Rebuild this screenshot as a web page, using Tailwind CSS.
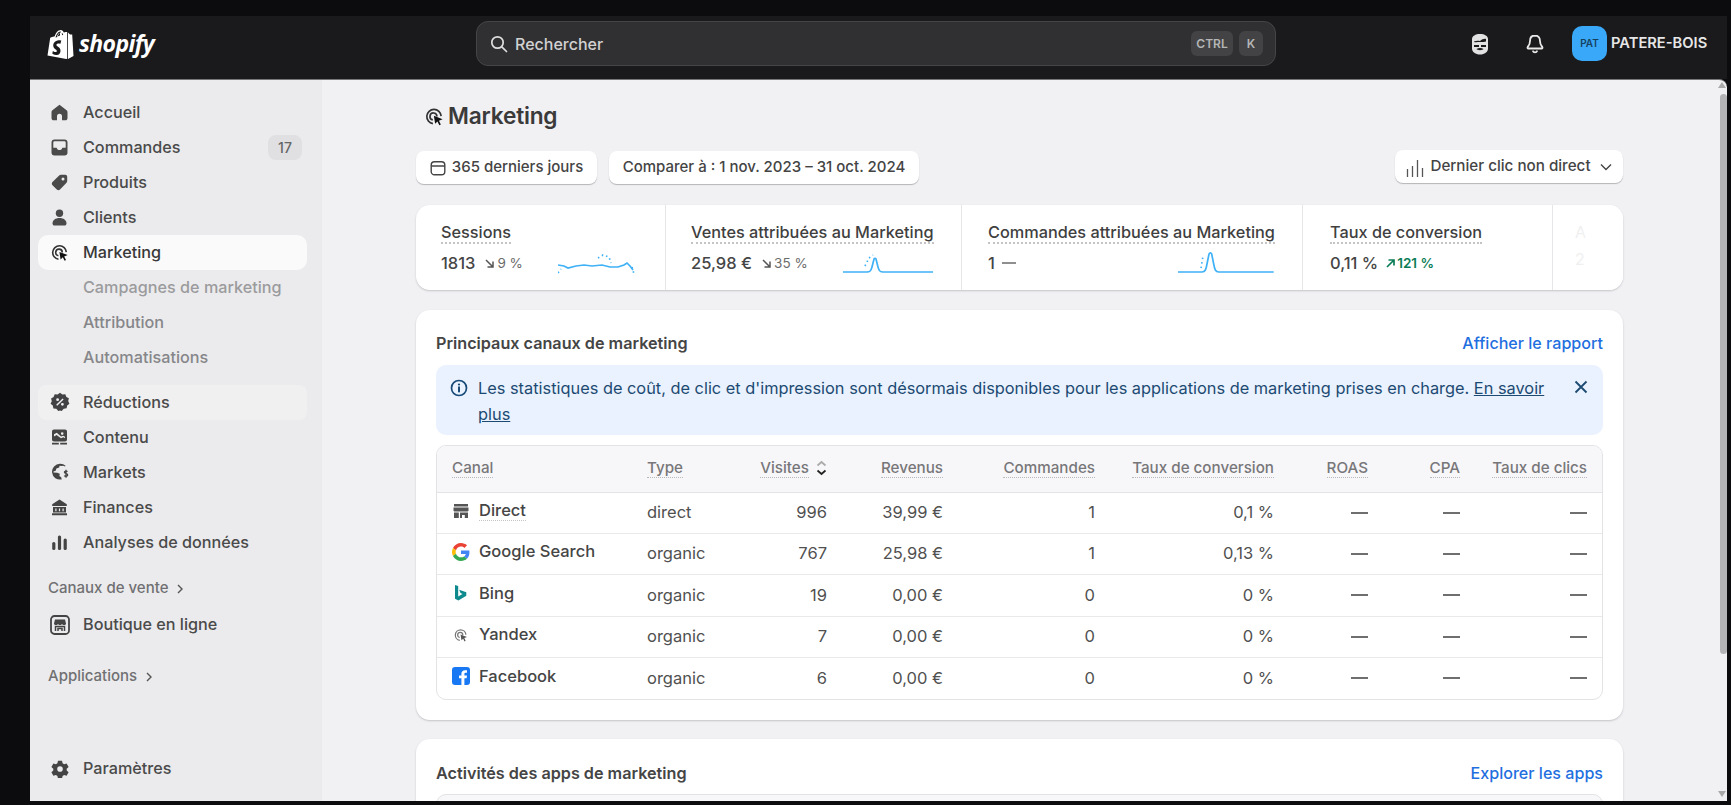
<!DOCTYPE html>
<html lang="fr">
<head>
  <meta charset="UTF-8" />
  <title>Marketing</title>
  <script src="https://cdn.jsdelivr.net/npm/@tailwindcss/browser@4"></script>
</head>
<body class="h-screen overflow-hidden bg-[#0c0b0e] pt-4 pl-[30px] pr-1 pb-1 font-['Inter',sans-serif] text-[#303030]">
  <div class="flex h-full flex-col">

    <!-- HEADER -->
    <header class="relative flex h-[63px] shrink-0 items-center bg-[#1a191b] pb-2">
      <a class="ml-[17px] flex w-[429px] items-center gap-[5px] text-white">
        <svg class="h-[30px] w-[27px]" viewBox="0 0 27 30"><path fill="#fff" d="M18 3.2l-1.2.4C16.2 2 15.2 1 13.8 1 11 1 8.600 4 7.800 7.200L4.300 8.300c-1 .3-1.100.4-1.200 1.300L.5 26.500 19.300 30l.9-.2V3.100c-.8-.1-1.500-.1-2.200.1zM11 7.300l-1 .3c.5-1.800 1.400-3.500 2.800-3.900.3 1 .4 2.500-.1 3.100zM13.300 2.500c.4 0 .7.200.9.500-1.600.7-3 2.500-3.600 5l-2.100.6c.6-2.400 2.500-6.100 4.800-6.100zM15 6.300v-.2c0-.8-.1-1.500-.3-2 .7.100 1.200.9 1.500 1.700z"/><path fill="#fff" d="M21 3.500l2 1.900 2.200.2 1.300 21.300-5.500 3z"/><path fill="#1a191b" d="M14.300 11.600l-.9 3.200s-1-.5-2.200-.4c-1.700.1-1.800 1.200-1.800 1.500.1 1.500 3.900 1.800 4.100 5.300.2 2.800-1.400 4.700-3.800 4.800-2.800.2-4.400-1.500-4.400-1.500l.6-2.500s1.600 1.200 2.800 1.100c.8 0 1.100-.7 1.100-1.200-.1-2-3.300-1.800-3.500-5-.2-2.700 1.600-5.400 5.400-5.700 1.600-.1 2.600.3 2.600.3z"/></svg>
        <span class="font-['Open_Sans',sans-serif] text-[23px] leading-none font-bold italic tracking-[-0.6px]">shopify</span>
      </a>
      <div class="flex h-[45px] w-[800px] items-center rounded-xl border border-[#454547] bg-[#303032] pr-3 pl-[13px]">
        <svg class="h-[18px] w-[18px] text-[#dedede]" viewBox="0 0 18 18" fill="none" stroke="currentColor" stroke-width="1.7"><circle cx="7.500" cy="7.500" r="5.700"/><path d="M11.800 11.800l4.700 4.700" stroke-linecap="round"/></svg>
        <span class="ml-[7px] text-[16px] font-medium text-[#d2d2d2]">Rechercher</span>
        <span class="ml-auto flex h-[25px] w-[42px] items-center justify-center rounded-md bg-[#434345] text-[12px] font-semibold text-[#b5b5b5]">CTRL</span>
        <span class="ml-[6px] flex h-[25px] w-[24px] items-center justify-center rounded-md bg-[#434345] text-[12px] font-semibold text-[#b5b5b5]">K</span>
      </div>
      <!-- avatar et icones -->
      <svg class="ml-[194px] h-[22px] w-[20px]" viewBox="0 0 20 22"><path fill="#e2e2e2" d="M2 6c0-3 3.500-5 8-5s8 2 8 5v9.500c0 3.500-3.500 6-8 6s-8-2.500-8-6z"/><path fill="#1a191b" d="M4 8.500c2-1 4-1 6-.5 2-1.500 4-2.500 6-2v2.500c-1 .5-4 .5-6 .5s-4 .5-6 0zM4 12h5v2H4zM11 12h5v2h-5zM6.500 16c2-1.500 5-1.500 7 0-1 1.500-6 1.500-7 0z"/></svg>
      <svg class="ml-[35px] h-[22px] w-[20px] text-[#e8e8e8]" viewBox="0 0 20 22" fill="none" stroke="currentColor" stroke-width="1.800"><path d="M10 2.500c-3.300 0-5 2.500-5 5.500 0 3.500-1.200 4.500-2.300 6-.5.700-.1 1.500.7 1.500h13.200c.8 0 1.200-.8.700-1.500C16.200 12.500 15 11.500 15 8c0-3-1.700-5.500-5-5.500z" stroke-linejoin="round"/><path d="M8 18.300c.5 1.300 3.500 1.300 4 0" stroke-linecap="round"/></svg>
      <span class="ml-[27px] flex h-[35px] w-[35px] items-center justify-center rounded-[10px] bg-[#3aa8f8] text-[10px] font-semibold text-[#15415f]">PAT</span>
      <span class="ml-1 text-[14.700px] font-semibold text-[#e6e6e6]">PATERE-BOIS</span>
    </header>

    <div class="flex min-h-0 flex-1 overflow-hidden rounded-tr-lg border-t border-[#777] bg-[#f1f0f3]">

      <!-- SIDEBAR -->
      <nav class="flex w-[292px] shrink-0 flex-col bg-[#ebebed] pt-[14.500px] pr-[15px] pb-[15px] pl-2 text-[16.200px] font-medium text-[#4a4a4a]">
        <a class="flex h-[35px] items-center rounded-lg pl-[13px]">
          <svg class="mr-[15px] h-[17px] w-[17px] shrink-0 text-[#4a4a4a]" viewBox="0 0 17 17"><path fill="currentColor" d="M8.500.8L1.400 6.300c-.6.500-.9 1.100-.9 1.900v6c0 1.200 1 2.100 2.100 2.100H6v-4a2.500 2.500 0 0 1 5 0v4h3.400c1.100 0 2.100-.9 2.100-2.100v-6c0-.8-.3-1.400-.9-1.900z"/></svg>
          Accueil
        </a>
        <a class="flex h-[35px] items-center rounded-lg pl-[13px]">
          <svg class="mr-[15px] h-[17px] w-[17px] shrink-0" viewBox="0 0 17 17"><path fill="none" stroke="#4a4a4a" stroke-width="1.800" d="M3.500 1.400h10c1.200 0 2.100.9 2.100 2.100v10c0 1.200-.9 2.100-2.100 2.100h-10a2.100 2.100 0 0 1-2.100-2.100v-10c0-1.200.9-2.100 2.100-2.100z"/><path fill="#4a4a4a" d="M1.500 8.700h4.100c.4 1.500 1.500 2.400 2.900 2.400s2.500-.9 2.900-2.400h4.100V14c0 1-.7 1.700-1.700 1.700H3.200c-1 0-1.700-.7-1.700-1.700z"/></svg>
          Commandes
          <span class="mr-[5px] ml-auto flex h-[25px] w-[34px] items-center justify-center rounded-lg bg-[#e0e0e2] text-[14px] text-[#666]">17</span>
        </a>
        <a class="flex h-[35px] items-center rounded-lg pl-[13px]">
          <svg class="mr-[15px] h-[17px] w-[17px] shrink-0 text-[#4a4a4a]" viewBox="0 0 17 17"><path fill="currentColor" fill-rule="evenodd" d="M10 .8h4.300c1.100 0 1.900.9 1.900 1.900V7c0 .8-.3 1.500-.9 2.100L9 15.500c-.9.900-2.300.9-3.200 0l-4.300-4.300c-.9-.9-.9-2.300 0-3.200L7.900 1.700C8.500 1.100 9.200.8 10 .8zm2 2.700a1.500 1.500 0 1 0 0 3 1.500 1.500 0 0 0 0-3z"/></svg>
          Produits
        </a>
        <a class="flex h-[35px] items-center rounded-lg pl-[13px]">
          <svg class="mr-[15px] h-[17px] w-[17px] shrink-0 text-[#4a4a4a]" viewBox="0 0 17 17"><circle fill="currentColor" cx="8.500" cy="4.200" r="3.700"/><path fill="currentColor" d="M8.500 9c-4 0-7 2.200-7 5.400 0 1.100.9 2.100 2 2.100h10c1.100 0 2-1 2-2.100C15.500 11.200 12.500 9 8.500 9z"/></svg>
          Clients
        </a>
        <a class="flex h-[35px] items-center rounded-[10px] bg-[#fafafb] pl-[13px] text-[#383838]">
          <svg class="mr-[14px] h-[17px] w-[18px] shrink-0 text-[#333]" viewBox="0 0 18 17" fill="none" stroke="currentColor" stroke-width="1.600"><path d="M7.500 15.300a6.800 6.800 0 1 1 7.800-7.200"/><path d="M7.400 11.700a3.300 3.300 0 1 1 3.900-3.300"/><path fill="#111" stroke="none" d="M8.400 7.900l8.300 3.100-3.500 1.500 1.800 3.500-1.400.7-1.800-3.500-2.200 2.200z"/></svg>
          Marketing
        </a>
        <a class="flex h-[35px] items-center pl-[45px] text-[#9b9b9d]">Campagnes de marketing</a>
        <a class="flex h-[35px] items-center pl-[45px] text-[#86868a]">Attribution</a>
        <a class="flex h-[35px] items-center pl-[45px] text-[#86868a]">Automatisations</a>
        <a class="mt-[10px] flex h-[35px] items-center rounded-lg bg-white/25 pl-[13px]">
          <svg class="mr-[13px] -ml-[1px] h-[20px] w-[20px] shrink-0 text-[#424244]" viewBox="0 0 20 20"><path fill="currentColor" fill-rule="evenodd" d="M10 .8l2.400 1.600 2.900-.2 1.100 2.700 2.500 1.400-.7 2.800 1.200 2.600-2.200 1.800-.6 2.800-2.900.4L11.700 19 10 18.500 8.300 19l-2-2.200-2.900-.4-.6-2.800L.6 11.800l1.200-2.600-.7-2.800 2.500-1.400 1.100-2.700 2.900.2zM7.600 6.300a1.400 1.400 0 1 0 0 2.800 1.400 1.400 0 0 0 0-2.800zm4.800 4.600a1.400 1.400 0 1 0 0 2.800 1.400 1.400 0 0 0 0-2.800zm.2-4.500l-6.400 6.400 1 1 6.400-6.400z"/></svg>
          Réductions
        </a>
        <a class="flex h-[35px] items-center rounded-lg pl-[13px]">
          <svg class="mr-[15px] h-[17px] w-[17px] shrink-0 text-[#444]" viewBox="0 0 17 17"><path fill="currentColor" fill-rule="evenodd" d="M3 .6h11c1.200 0 2 .9 2 2v7.800c0 1.200-.8 2-2 2H3c-1.200 0-2-.8-2-2V2.600C1 1.500 1.800.6 3 .6zm8.200 2.700a1.300 1.300 0 1 0 0 2.600 1.300 1.300 0 0 0 0-2.600zM3 5.200v2.300l2.600-1.600 4.400 3.400 2.500-1 1.500 1V7.700l-1.800-.9-2.200.8L5.800 3.800z"/><path fill="currentColor" d="M1 13.800h6.800v1.700H1zM9.200 13.800H16v1.700H9.200z"/></svg>
          Contenu
        </a>
        <a class="flex h-[35px] items-center rounded-lg pl-[13px]">
          <svg class="mr-[14px] h-[18px] w-[18px] shrink-0 text-[#444]" viewBox="0 0 18 18"><path fill="currentColor" d="M9 .8a7.900 7.900 0 1 0 1.700 15.600l-.5-2.200-1.800-1.100.4-2.300-2.600-1.100-3.700-.2-.1-1.100 2.300-.6.700-2.400 2.800-.9.300-1.800 2.500.2a3 3 0 0 1 2.900.7l.7-.8A7.900 7.900 0 0 0 9 .8z"/><path fill="none" stroke="currentColor" stroke-width="1.300" d="M16.500 8.700c-.5-.8-2.900-1-3.100.4-.2 1.600 3.300 1.100 3.300 3 0 1.500-2.600 1.500-3.500.5M15 6.800v8"/></svg>
          Markets
        </a>
        <a class="flex h-[35px] items-center rounded-lg pl-[13px]">
          <svg class="mr-[15px] h-[17px] w-[17px] shrink-0 text-[#444]" viewBox="0 0 17 17"><path fill="currentColor" fill-rule="evenodd" d="M8.500.6l7.300 4.600V7H1.200V5.200zM2 8h13v5.500H2zm2.300 1.500v2.700h1.200V9.500zm3.600 0v2.700h1.200V9.500zm3.600 0v2.700h1.200V9.500zM1 14.300h15v2H1z"/></svg>
          Finances
        </a>
        <a class="flex h-[35px] items-center rounded-lg pl-[13px]">
          <svg class="mr-[15px] h-[17px] w-[17px] shrink-0 text-[#444]" viewBox="0 0 17 17"><rect fill="currentColor" x="1.200" y="8" width="3.200" height="8" rx="1.500"/><rect fill="currentColor" x="6.900" y="1.500" width="3.200" height="14.500" rx="1.500"/><rect fill="currentColor" x="12.600" y="4.500" width="3.200" height="11.500" rx="1.500"/></svg>
          Analyses de données
        </a>
        <div class="mt-[11.500px] flex h-[35px] items-center pl-[10px] text-[15px] text-[#707072]">
          Canaux de vente
          <svg class="ml-[9px] h-[10px] w-[6px]" viewBox="0 0 6 10" fill="none" stroke="#555" stroke-width="1.400"><path d="M1 1l4 4-4 4"/></svg>
        </div>
        <a class="mt-[1px] flex h-[35px] items-center rounded-lg pl-[13px]">
          <svg class="mr-[13px] -ml-[1px] h-[20px] w-[20px] shrink-0 text-[#444]" viewBox="0 0 20 20"><rect x="1" y="1" width="18" height="18" rx="3.500" fill="none" stroke="currentColor" stroke-width="1.800"/><path fill="currentColor" d="M5 4.500h10l1 4c0 1-1 1.500-2 1.500s-1.500-.4-2-1c-.5.600-1 1-2 1s-1.500-.4-2-1c-.5.600-1 1-2 1s-2-.5-2-1.500z"/><path fill="none" stroke="currentColor" stroke-width="1.500" d="M5.500 16v-4.500h9V16M8 16v-2.500h4V16"/></svg>
          Boutique en ligne
        </a>
        <div class="mt-[17px] flex h-[35px] items-center pl-[10px] text-[15px] text-[#707072]">
          Applications
          <svg class="ml-[9px] h-[10px] w-[6px]" viewBox="0 0 6 10" fill="none" stroke="#555" stroke-width="1.400"><path d="M1 1l4 4-4 4"/></svg>
        </div>
        <a class="mt-auto flex h-[35px] items-center rounded-lg pl-[13px]">
          <svg class="mr-[14.500px] -ml-[0.5px] h-[18px] w-[18px] shrink-0 text-[#444]" viewBox="0 0 18 18"><path fill="currentColor" fill-rule="evenodd" d="M7 .8h4l.6 2.500 1.500.9 2.500-.7 2 3.500-1.900 1.800v1.700l1.900 1.800-2 3.500-2.500-.7-1.500.9-.6 2.500H7l-.6-2.500-1.500-.9-2.500.7-2-3.500 1.900-1.800V8.800L.4 7l2-3.500 2.500.7 1.500-.9zM9 6.200a2.800 2.800 0 1 0 0 5.600 2.800 2.800 0 0 0 0-5.600z"/></svg>
          Paramètres
        </a>
      </nav>

      <!-- MAIN -->
      <main class="relative min-w-0 flex-1 overflow-hidden pl-[94px]">
        <div class="w-[1207px]">
          <div class="flex h-[71px] items-center pt-[2px] pl-[9px]">
            <svg class="mr-[4px] h-[19px] w-[19px] text-[#333]" viewBox="0 0 18 17" fill="none" stroke="currentColor" stroke-width="1.600"><path d="M7.500 15.300a6.800 6.800 0 1 1 7.800-7.200"/><path d="M7.400 11.700a3.300 3.300 0 1 1 3.900-3.300"/><path fill="#111" stroke="none" d="M8.400 7.900l8.300 3.100-3.500 1.500 1.800 3.500-1.400.7-1.800-3.500-2.200 2.200z"/></svg>
            <h1 class="text-[22.700px] font-semibold tracking-[-0.2px] text-[#3a3a3a]">Marketing</h1>
          </div>

          <div class="flex items-start">
            <button class="flex h-[33px] w-[181px] items-center justify-center gap-[6px] rounded-lg bg-white text-[15px] font-medium text-[#444] shadow-[0_1px_1px_#b5b5b8]">
              <svg class="h-[16px] w-[16px]" viewBox="0 0 16 16" fill="none" stroke="#444" stroke-width="1.400"><rect x="1.200" y="1.700" width="13.600" height="13" rx="3.300"/><path d="M1.200 6h13.600"/></svg>
              365 derniers jours
            </button>
            <button class="ml-[12px] flex h-[33px] w-[310px] items-center justify-center rounded-lg bg-white text-[15px] font-medium text-[#444] shadow-[0_1px_1px_#b5b5b8]">Comparer à : 1 nov. 2023 – 31 oct. 2024</button>
            <button class="-mt-[1px] ml-auto flex h-[33px] w-[228px] items-center justify-center gap-[6px] rounded-lg bg-white text-[15.200px] font-medium text-[#444] shadow-[0_1px_1px_#b5b5b8]">
              <svg class="h-[24px] w-[18px]" viewBox="0 0 18 24" stroke="#555" stroke-width="1.300"><path d="M1.500 14v8M6.500 11v11M11.500 5v17M16.500 13v9"/></svg>
              Dernier clic non direct
              <svg class="ml-[3px] h-[8px] w-[12px]" viewBox="0 0 12 8" fill="none" stroke="#444" stroke-width="1.400"><path d="M1 1.500l5 5 5-5"/></svg>
            </button>
          </div>

          <!-- Metriques -->
          <section class="relative mt-[21px] flex h-[85px] overflow-hidden rounded-[14px] bg-white shadow-[0_1px_2px_#c4c4c8]">
            <div class="w-[250px] border-r border-[#e6e6e8] pt-[18px] pr-[29px] pl-[25px]">
              <span class="block w-fit border-b-2 border-dotted border-[#c4c4c6] text-[16.300px] leading-[19px] font-medium text-[#3f3f3f]">Sessions</span>
              <div class="mt-[7px] flex h-[24px] items-center">
                <span class="text-[16.500px] font-medium text-[#454545]">1813</span>
                <svg class="ml-[10px] h-[9px] w-[9px]" viewBox="0 0 9 9" fill="none" stroke="#555" stroke-width="1.500"><path d="M1 1l6.500 6.500M8 2.500V8H2.500"/></svg>
                <span class="ml-[3px] text-[13.500px] text-[#6b6b6b]">9 %</span>
                <svg class="mt-1 ml-auto h-[28px] w-[78px]" viewBox="0 0 78 28" fill="none" stroke="#3fb1f6" stroke-width="1.700"><path d="M0 14l6 1 4 2 8-2 8-1 8 1 10-1 8 2 8 0 6-2 3-2 3 3 3 4"/><path stroke-dasharray="1.500 3" d="M40 7l5-3 6 2 2 6M0 22l3-4M74 16l2 7"/></svg>
              </div>
            </div>
            <div class="w-[296px] border-r border-[#e6e6e8] pt-[18px] pr-[26px] pl-[25px]">
              <span class="block w-fit border-b-2 border-dotted border-[#c4c4c6] text-[16.300px] leading-[19px] font-medium text-[#3f3f3f]">Ventes attribuées au Marketing</span>
              <div class="mt-[7px] flex h-[24px] items-center">
                <span class="text-[16.500px] font-medium text-[#454545]">25,98 €</span>
                <svg class="ml-[10px] h-[9px] w-[9px]" viewBox="0 0 9 9" fill="none" stroke="#555" stroke-width="1.500"><path d="M1 1l6.500 6.500M8 2.500V8H2.500"/></svg>
                <span class="ml-[3px] text-[13.500px] text-[#6b6b6b]">35 %</span>
                <svg class="mt-1 ml-auto h-[28px] w-[92px]" viewBox="0 0 92 28" fill="none" stroke="#3fb1f6" stroke-width="1.700"><path d="M0 21h24c3 0 4-1 5-5l2-8c.5-1 1.500-1 2 0l2 8c1 4 2 5 5 5h50"/><path stroke-dasharray="1.500 3" d="M22 15l2-4 2-4 4-3"/></svg>
              </div>
            </div>
            <div class="w-[341px] border-r border-[#e6e6e8] pt-[18px] pr-[27px] pl-[26px]">
              <span class="block w-fit border-b-2 border-dotted border-[#c4c4c6] text-[16.300px] leading-[19px] font-medium text-[#3f3f3f]">Commandes attribuées au Marketing</span>
              <div class="mt-[7px] flex h-[24px] items-center">
                <span class="text-[16.500px] font-medium text-[#454545]">1</span>
                <span class="ml-[7px] h-[2px] w-[14px] bg-[#8f8f8f]"></span>
                <svg class="mt-1 ml-auto h-[28px] w-[97px]" viewBox="0 0 97 28" fill="none" stroke="#3fb1f6" stroke-width="1.700"><path d="M0 21h24c3 0 4-2 5-8l2-10c.7-1.500 2-1.500 2.700 0l2 10c1 6 2 8 5 8h55"/><path stroke-dasharray="1.500 3" d="M23 17l2-12"/></svg>
              </div>
            </div>
            <div class="w-[250px] border-r border-[#e6e6e8] pt-[18px] pl-[27px]">
              <span class="block w-fit border-b-2 border-dotted border-[#c4c4c6] text-[16.300px] leading-[19px] font-medium text-[#3f3f3f]">Taux de conversion</span>
              <div class="mt-[7px] flex h-[24px] items-center">
                <span class="text-[16.500px] font-medium text-[#454545]">0,11 %</span>
                <svg class="ml-[8px] h-[9px] w-[9px]" viewBox="0 0 9 9" fill="none" stroke="#0a7d56" stroke-width="1.700"><path d="M1 8l6.500-6.500M2.500 1H8v5.500"/></svg>
                <span class="ml-[2px] text-[13.500px] font-semibold text-[#0a7d56]">121 %</span>
              </div>
            </div>
            <div class="pt-[18px] pl-[22px] text-[16px] leading-[19px] text-[#d4d4d6]">
              <span>A</span>
              <div class="mt-[8px]">2</div>
            </div>
            <div class="absolute top-0 right-0 h-full w-[70px] bg-linear-to-r from-white/40 to-white"></div>
          </section>

          <!-- Principaux canaux -->
          <section class="mt-[20px] h-[410px] rounded-[14px] bg-white px-5 pt-[20px] shadow-[0_1px_2px_#c4c4c8]">
            <div class="flex h-[26px] items-center justify-between">
              <h2 class="text-[16.200px] font-semibold text-[#454545]">Principaux canaux de marketing</h2>
              <a class="text-[16.100px] font-medium text-[#1f6fe0]">Afficher le rapport</a>
            </div>
            <div class="mt-[9px] flex h-[70px] rounded-[10px] bg-[#e9f2fe] pt-[10px] pr-[15px] pl-[14px] text-[16.350px] leading-[26px] text-[#1d4a72]">
              <svg class="mt-[4px] mr-[10px] h-[18px] w-[18px] shrink-0" viewBox="0 0 18 18" fill="none" stroke="#174a78" stroke-width="1.700"><circle cx="9" cy="9" r="7.500"/><path d="M9 8.200v4.300" stroke-width="2" stroke-linecap="round"/><circle cx="9" cy="5.500" r="1.100" fill="#174a78" stroke="none"/></svg>
              <p class="w-[1072px]">Les statistiques de coût, de clic et d'impression sont désormais disponibles pour les applications de marketing prises en charge. <a class="underline">En savoir</a> <a class="underline">plus</a></p>
              <svg class="mt-[5px] ml-auto h-[14px] w-[14px]" viewBox="0 0 14 14" stroke="#1d4a72" stroke-width="1.800"><path d="M1.500 1.500l11 11M12.500 1.500l-11 11"/></svg>
            </div>

            <div class="mt-[10px] overflow-hidden rounded-[10px] border border-[#e3e3e5]">
              <table class="w-full table-fixed border-collapse text-[16.500px] text-[#505050]">
                <colgroup>
                  <col class="w-[194px]" /><col class="w-[129px]" /><col class="w-[83px]" /><col class="w-[116px]" /><col class="w-[152px]" /><col class="w-[179px]" /><col class="w-[94px]" /><col class="w-[92px]" /><col class="w-[126px]" />
                </colgroup>
                <thead class="bg-[#f7f6f8] text-[15.200px] font-medium text-[#77777a]">
                  <tr class="h-[46px] border-b border-[#e3e3e5]">
                    <th class="pr-4 pl-[15px] text-left font-medium"><span class="border-b border-dotted border-[#b9b9bb]">Canal</span></th>
                    <th class="px-4 text-left font-medium"><span class="border-b border-dotted border-[#b9b9bb]">Type</span></th>
                    <th class="pr-4 text-right font-medium whitespace-nowrap"><span class="border-b border-dotted border-[#b9b9bb]">Visites</span>
                      <svg class="ml-[3px] inline-block h-[18px] w-[11px] align-[-4px]" viewBox="0 0 11 18" fill="none" stroke-width="1.700"><path stroke="#aaa" d="M1.500 6.500L5.500 3l4 3.500"/><path stroke="#222" d="M1.500 11.500l4 3.500 4-3.500"/></svg>
                    </th>
                    <th class="px-4 text-right font-medium"><span class="border-b border-dotted border-[#b9b9bb]">Revenus</span></th>
                    <th class="px-4 text-right font-medium"><span class="border-b border-dotted border-[#b9b9bb]">Commandes</span></th>
                    <th class="px-4 text-right font-medium whitespace-nowrap"><span class="border-b border-dotted border-[#b9b9bb]">Taux de conversion</span></th>
                    <th class="px-4 text-right font-medium"><span class="border-b border-dotted border-[#b9b9bb]">ROAS</span></th>
                    <th class="px-4 text-right font-medium"><span class="border-b border-dotted border-[#b9b9bb]">CPA</span></th>
                    <th class="pr-[15px] text-right font-medium whitespace-nowrap"><span class="border-b border-dotted border-[#b9b9bb]">Taux de clics</span></th>
                  </tr>
                </thead>
                <tbody>
                  <tr class="h-[41px] border-b border-[#e9e9eb]">
                    <td class="pl-[15px]"><span class="flex items-center gap-[9px] pb-[3px] font-medium text-[#454545]">
                      <svg class="h-[18px] w-[18px] shrink-0 text-[#555]" viewBox="0 0 18 18"><path fill="currentColor" d="M2 2h14v2.500H2zM1.500 5.500h15v3c0 .8-.8 1-1.500 1H3c-.7 0-1.500-.2-1.500-1zM2 10.500h4.800V16H2zM8 10.500h8V16h-3.200v-3H10v3H8z"/></svg>
                      <span class="border-b border-dotted border-[#c4c4c6] leading-[19px]">Direct</span></span></td>
                    <td class="px-4">direct</td>
                    <td class="pr-4 text-right">996</td>
                    <td class="px-4 text-right">39,99 €</td>
                    <td class="px-4 text-right">1</td>
                    <td class="px-4 text-right">0,1 %</td>
                    <td class="pr-4"><span class="ml-auto block h-[2px] w-[17px] bg-[#6f6f6f]"></span></td>
                    <td class="pr-4"><span class="ml-auto block h-[2px] w-[17px] bg-[#6f6f6f]"></span></td>
                    <td class="pr-[15px]"><span class="ml-auto block h-[2px] w-[17px] bg-[#6f6f6f]"></span></td>
                  </tr>
                  <tr class="h-[41.500px] border-b border-[#e9e9eb]">
                    <td class="pl-[15px]"><span class="flex items-center gap-[9px] pb-[4px] font-medium text-[#454545]">
                      <svg class="h-[18px] w-[18px] shrink-0" viewBox="0 0 48 48"><path fill="#EA4335" d="M24 9.500c3.500 0 6.700 1.200 9.200 3.600l6.900-6.900C35.900 2.400 30.500 0 24 0 14.600 0 6.500 5.400 2.600 13.200l8 6.200C12.500 13.700 17.800 9.500 24 9.500z"/><path fill="#4285F4" d="M46.500 24.500c0-1.600-.1-3.100-.4-4.500H24v9h12.700c-.5 2.900-2.200 5.400-4.700 7l7.700 6c4.500-4.200 6.800-10.300 6.800-17.500z"/><path fill="#FBBC05" d="M10.500 28.600c-.5-1.400-.8-3-.8-4.600s.3-3.200.8-4.600l-8-6.200C.9 16.500 0 20.100 0 24s.9 7.500 2.600 10.800z"/><path fill="#34A853" d="M24 48c6.500 0 11.900-2.100 15.900-5.800L32 36c-2.100 1.500-4.900 2.300-8 2.300-6.200 0-11.500-4.200-13.400-9.800l-8 6.200C6.500 42.600 14.600 48 24 48z"/></svg>
                      Google Search</span></td>
                    <td class="px-4">organic</td>
                    <td class="pr-4 text-right">767</td>
                    <td class="px-4 text-right">25,98 €</td>
                    <td class="px-4 text-right">1</td>
                    <td class="px-4 text-right">0,13 %</td>
                    <td class="pr-4"><span class="ml-auto block h-[2px] w-[17px] bg-[#6f6f6f]"></span></td>
                    <td class="pr-4"><span class="ml-auto block h-[2px] w-[17px] bg-[#6f6f6f]"></span></td>
                    <td class="pr-[15px]"><span class="ml-auto block h-[2px] w-[17px] bg-[#6f6f6f]"></span></td>
                  </tr>
                  <tr class="h-[41.500px] border-b border-[#e9e9eb]">
                    <td class="pl-[15px]"><span class="flex items-center gap-[9px] pb-[4px] font-medium text-[#454545]">
                      <svg class="h-[18px] w-[18px] shrink-0" viewBox="0 0 18 18"><path fill="#0e8a8f" d="M3 1l3.200 1.100v10.300l4.300-2.500-2-1-1.300-3.200 7.100 2.500v3.500l-7.900 4.800L3 14.800z"/></svg>
                      Bing</span></td>
                    <td class="px-4">organic</td>
                    <td class="pr-4 text-right">19</td>
                    <td class="px-4 text-right">0,00 €</td>
                    <td class="px-4 text-right">0</td>
                    <td class="px-4 text-right">0 %</td>
                    <td class="pr-4"><span class="ml-auto block h-[2px] w-[17px] bg-[#6f6f6f]"></span></td>
                    <td class="pr-4"><span class="ml-auto block h-[2px] w-[17px] bg-[#6f6f6f]"></span></td>
                    <td class="pr-[15px]"><span class="ml-auto block h-[2px] w-[17px] bg-[#6f6f6f]"></span></td>
                  </tr>
                  <tr class="h-[41.500px] border-b border-[#e9e9eb]">
                    <td class="pl-[15px]"><span class="flex items-center gap-[9px] pb-[4px] font-medium text-[#454545]">
                      <svg class="h-[18px] w-[18px] shrink-0 p-[2px] text-[#777]" viewBox="0 0 18 17" fill="none" stroke="currentColor" stroke-width="1.600"><path d="M7.500 15.300a6.800 6.800 0 1 1 7.800-7.200"/><path d="M7.400 11.700a3.300 3.300 0 1 1 3.900-3.300"/><path fill="#555" stroke="none" d="M8.400 7.900l8.300 3.100-3.500 1.500 1.800 3.500-1.400.7-1.800-3.500-2.200 2.200z"/></svg>
                      Yandex</span></td>
                    <td class="px-4">organic</td>
                    <td class="pr-4 text-right">7</td>
                    <td class="px-4 text-right">0,00 €</td>
                    <td class="px-4 text-right">0</td>
                    <td class="px-4 text-right">0 %</td>
                    <td class="pr-4"><span class="ml-auto block h-[2px] w-[17px] bg-[#6f6f6f]"></span></td>
                    <td class="pr-4"><span class="ml-auto block h-[2px] w-[17px] bg-[#6f6f6f]"></span></td>
                    <td class="pr-[15px]"><span class="ml-auto block h-[2px] w-[17px] bg-[#6f6f6f]"></span></td>
                  </tr>
                  <tr class="h-[41px]">
                    <td class="pl-[15px]"><span class="flex items-center gap-[9px] pb-[4px] font-medium text-[#454545]">
                      <svg class="h-[18px] w-[18px] shrink-0" viewBox="0 0 18 18"><rect width="18" height="18" rx="3" fill="#1877f2"/><path fill="#fff" d="M12.400 18v-6.700h2.200l.4-2.700h-2.600V7c0-.8.3-1.300 1.400-1.300H15V3.300c-.3 0-1-.1-2-.1-2.200 0-3.600 1.300-3.600 3.600v1.800H7v2.700h2.400V18z"/></svg>
                      Facebook</span></td>
                    <td class="px-4">organic</td>
                    <td class="pr-4 text-right">6</td>
                    <td class="px-4 text-right">0,00 €</td>
                    <td class="px-4 text-right">0</td>
                    <td class="px-4 text-right">0 %</td>
                    <td class="pr-4"><span class="ml-auto block h-[2px] w-[17px] bg-[#6f6f6f]"></span></td>
                    <td class="pr-4"><span class="ml-auto block h-[2px] w-[17px] bg-[#6f6f6f]"></span></td>
                    <td class="pr-[15px]"><span class="ml-auto block h-[2px] w-[17px] bg-[#6f6f6f]"></span></td>
                  </tr>
                </tbody>
              </table>
            </div>
          </section>

          <!-- Activites -->
          <section class="mt-[19px] h-[100px] rounded-[14px] bg-white px-5 pt-[21px] shadow-[0_1px_2px_#c4c4c8]">
            <div class="flex h-[26px] items-center justify-between">
              <h2 class="text-[16.200px] font-semibold text-[#454545]">Activités des apps de marketing</h2>
              <a class="text-[16.100px] font-medium text-[#1f6fe0]">Explorer les apps</a>
            </div>
            <div class="mt-[8px] h-[40px] rounded-[10px] border border-[#e3e3e5] bg-[#f7f6f8]"></div>
          </section>
        </div>

        <!-- Barre de defilement -->
        <svg class="absolute top-[2px] right-[1px] h-[6px] w-[8px]" viewBox="0 0 8 6"><path fill="#aaa" d="M4 0l4 6H0z"/></svg>
        <div class="absolute top-[14px] right-0 h-[560px] w-[7px] rounded-sm bg-[#b4b4b6]"></div>
        <svg class="absolute right-[1px] bottom-[4px] h-[6px] w-[8px]" viewBox="0 0 8 6"><path fill="#aaa" d="M4 6l4-6H0z"/></svg>
      </main>
    </div>
  </div>
</body>
</html>
